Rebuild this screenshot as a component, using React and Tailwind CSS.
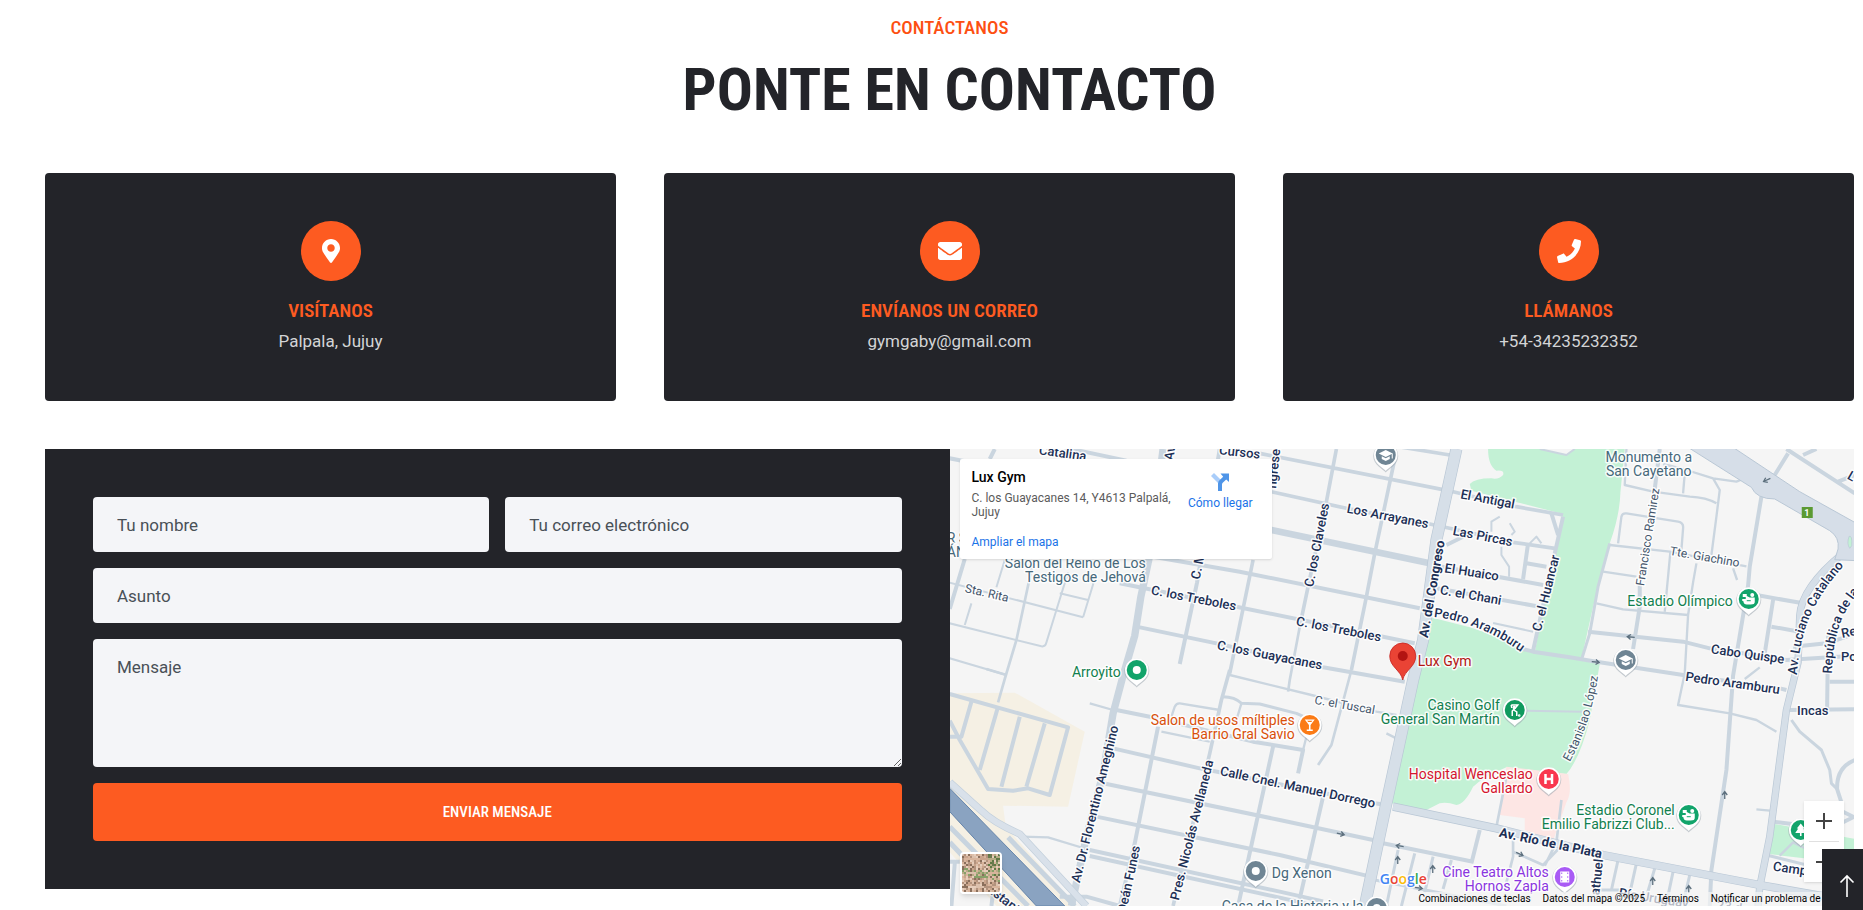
import React from "react";
import { FaMapMarkerAlt, FaEnvelope, FaPhone } from "react-icons/fa";

const ROADS = [
  [12, "M0 28L60 40M135 0L120 30M270 -20L530 35M810 0L742 400L690 645M45 330L0 480M610 323L870 368L1410 478M510 403L860 473L1395 583M560 533L800 583L1120 655L1365 698"],
  [20, "M965 243L1440 343"],
  [11, "M965 128L1190 178L1440 225L1510 240L1690 280L1815 298M930 13L1510 128L1700 173L1840 198M1340 -8L1500 18M1160 0L1130 158L1075 413L1050 533M1335 30L1275 313L1250 443L1205 663M910 333L840 673M840 663L815 753L780 913L670 1371"],
  [8, "M1050 533L1020 693L1015 728M1205 663L1145 888L1105 948"],
  [22, "M640 0L597 333L573 445L555 560L520 680L490 793L460 973L410 1163L365 1371"],
  [6, "M0 401L400 505M165 333L140 415M355 370L320 483L290 580Q287 594 275 592L0 523M432 400L400 505M330 433L415 453M0 628L170 678M65 463L45 528"],
  [8, "M250 340L200 573L165 690L145 760M110 660L170 678"],
  [12, "M1840 203L1815 313L1750 605M1700 595L1750 608L1860 625L1940 638L2200 678L2490 718L2510 723M1460 350L1780 408M1460 418L1770 473M1735 283L1720 390M1730 343L1790 353M1490 288L1540 263M1805 193L1825 258"],
  [6, "M1650 203L1625 218L1625 248M1680 223L1695 248L1685 258M1655 293L1655 318L1678 353L1678 383M1740 283L1760 263L1775 283M1630 522L1750 548M1770 0L1850 18L1875 0M1730 785L1900 788"],
  [12, "M2515 13L2475 78M2510 0L2715 133M2560 18L2600 0M2665 98L2715 78M2435 143L2400 353L2395 410L2350 680L2330 963L2285 1263L2280 1371M2130 0L2115 120M2070 405L2070 473L2050 600M1915 548L2200 578L2280 598L2510 633L2715 620M2420 438L2560 463M2470 453L2445 613M2465 533L2550 548"],
  [7, "M2030 0L2025 108L2110 128L2220 143Q2270 145 2300 163M2205 73L2200 133M2140 45L2210 63L2290 88L2310 123L2300 203L2285 318M2290 88L2360 98L2380 90M2005 283L2015 203Q2017 192 2030 193L2185 218Q2202 221 2200 238L2195 303M1980 288L2160 308L2390 352M2162 308L2145 488M1960 368L2060 383M1940 463L2020 481L2215 498M2240 343L2230 400L2215 498L2205 673L2185 768L2340 793L2420 813L2480 848M2350 358L2362 393M2385 690L2430 655M2420 1081L2460 1085"],
  [9, "M1980 283L1945 413L1920 553L1895 633M2525 813L2550 848L2615 903L2640 963L2645 1003L2665 1023"],
  [12, "M2635 560L2632 780M2530 593L2630 583L2715 555M2640 698L2715 698M2520 783L2715 781M2715 933Q2660 955 2662 1020L2675 1060M2680 1088L2712 1104L2680 1120M2470 1118L2570 1130"],
  [8, "M1835 1053L1820 1180L1785 1250M1690 1173L1690 1223L1670 1300M1690 1208L1780 1248L1840 1185M1670 983L1640 1133"],
  [12, "M1590 1143L1565 1243M1300 1183L1570 1238M460 1003L990 1113L1270 1173M490 898L750 958L1275 1063L1310 1068M440 1103L990 1218L1250 1280M500 783L600 803L910 878L1060 903L1045 973M625 833L555 1183L510 1371M970 893L865 1371M1120 1043L1045 1371M420 1203L990 1328L1120 1357M420 1221L990 1346L1100 1371"],
  [9, "M1345 1203L1310 1371M1395 1213L1355 1371M1450 1223L1425 1330M1505 1233L1480 1320M2005 1233L1985 1323M2060 1243L2040 1333M2115 1258L2090 1343M2170 1268L2150 1363M2220 1278L2200 1363M1275 1293L1670 1371M1935 1323L2010 1323M2450 1218L2600 1255"],
  [7, "M840 678L1085 738L1280 788L1340 798M1310 853L1340 868M420 763L490 783M665 803L675 773Q680 762 690 763L810 783M635 848L780 878M875 763L860 813M1070 863L1060 903M215 1163L295 1165L420 1203M2490 1220L2530 1180L2570 1200"],
  [9, "M815 743Q855 742 875 763L930 765L1040 793L1062 803"],
  [12, "M0 735L355 835L300 1038L235 1018L190 1025L115 1020L30 873L0 815M65 758L35 863L0 863M145 773L90 963M210 803L155 1013M285 823L230 1013M0 1238L30 1238M15 1243L5 1371M330 1343L410 1343L510 1371M130 1330L125 1371"],
];

const LABELS = [
  ["C. los Treboles", 244, 149, 11], ["C. los Treboles", 389, 180, 11], ["C. los Guayacanes", 320, 206, 11],
  ["Los Arrayanes", 438, 67, 11], ["El Antigal", 538, 50, 11], ["Las Pircas", 533, 87, 11], ["El Huaico", 522, 123, 9],
  ["C. el Chani", 521, 146, 10], ["C. los Claveles", 367, 96, -79], ["C. el Huancar", 596, 144, -76],
  ["Catalina", 113, 4, 8], ["Av", 220, 4, -80], ["C. M", 248, 117, -78], ["Cursos", 290, 3, 6], ["ngresel", 324, 18, -84],
  ["Cabo Quispe", 798, 205, 8], ["Pedro Aramburu", 783, 234, 8], ["Re", 899, 183, -12], ["Po", 899, 207, 0], ["L", 902, 27, 30],
  ["Incas", 863, 261, 0], ["Calle Cnel. Manuel Dorrego", 348, 338, 12], ["Av. Dr. Florentino Ameghino", 145, 355, -76],
  ["Pres. Nicolás Avellaneda", 242, 381, -76], ["Deán Funes", 179, 430, -78], ["Constant", 48, 445, 38],
  ["athuel", 647, 428, -84], ["Campo", 844, 420, 8], ["Río Uruguay", 704, 449, 9], ["23 de", 783, 458, 9],
];
const MAJOR = [["Av. del Congreso", 482, 140, -80], ["Av. Río de la Plata", 601, 394, 12]];
const MINOR = [["Sta. Rita", 37, 144, 13], ["Tte. Giachino", 755, 108, 10], ["Francisco Ramirez", 698, 88, -81], ["C. el Tuscal", 395, 256, 10]];

const PLACES = [
  ["end", "#46687a", 196, 119, ["Salón del Reino de Los", "Testigos de Jehová"]],
  ["middle", "#46687a", 699, 13, ["Monumento a", "San Cayetano"]],
  ["end", "#12804f", 171, 228, ["Arroyito"]],
  ["end", "#12804f", 783, 157, ["Estadio Olímpico"]],
  ["end", "#12804f", 550, 261, ["Casino Golf", "General San Martín"]],
  ["end", "#12804f", 725, 366, ["Estadio Coronel", "Emilio Fabrizzi Club..."]],
  ["end", "#d5152f", 583, 330, ["Hospital Wenceslao", "Gallardo"]],
  ["end", "#d9500a", 345, 276, ["Salon de usos míltiples", "Barrio Gral Savio"]],
  ["end", "#8a35e0", 599, 428, ["Cine Teatro Altos", "Hornos Zapla"]],
  ["start", "#46687a", 322, 429, ["Dg Xenon"]],
  ["start", "#46687a", 272, 462, ["Casa de la Historia y la"]],
  ["start", "#46687a", -3, 94, ["R S", "ÁN"]],
  ["start", "#b31412", 468, 217, ["Lux Gym"]],
];

const ARROWS = [
  [681, 188, 185], [646, 213, 5], [817, 31, 155], [775, 346, -90], [703, 432, -90], [739, 440, -90],
  [391, 385, 12], [450, 397, 190], [448, 411, -90], [483, 420, -90], [570, 405, 25], [469, 439, 8],
];

function Street({ items, size, weight, fill }) {
  return items.map(([text, x, y, angle], i) => (
    <text key={i} transform={`translate(${x} ${y}) rotate(${angle})`} textAnchor="middle" dominantBaseline="central" fontSize={size} fontWeight={weight} fill={fill}>
      {text}
    </text>
  ));
}

const GLYPHS = {
  dot: <circle r="4" fill="#fff" />,
  school: (
    <g fill="#fff">
      <path d="M0 -5L7 -1.5L0 2L-7 -1.5Z" />
      <path d="M-4 1.2V4L0 6L4 4V1.2L0 3.2Z" />
      <path d="M6 -1.5H7V3.5H6Z" />
    </g>
  ),
  stadium: (
    <g fill="#fff">
      <path d="M-6 -5H-2V-3L1 -1.5H6V3Q6 5.5 2 5.5H-2Q-5 5.5 -5.5 2H-6.5V0H-3V-2H-6Z" />
      <circle cx="3.5" cy="-4" r="2" />
      <path d="M-2 1.2H2V2.2H-2Z" fill="#12a46b" />
    </g>
  ),
  bar: <path d="M-5 -5.5H5L.8 0V4.6H3V6H-3V4.6H-.8V0ZM-2.6 -4.2L-1.6 -3H1.6L2.6 -4.2Z" fill="#fff" fillRule="evenodd" />,
  golf: (
    <g stroke="#fff" fill="none" strokeWidth="1.5">
      <path d="M-3.5 -5H3L1 -2.5L-2.5 1V6M-1 0L2 2V6M-3.5 -5L-3 -2" />
      <circle cx="-.5" cy="-2.5" r="1" fill="#fff" />
      <circle cx="4.5" cy="5.5" r=".5" />
    </g>
  ),
  hospital: <path d="M-4.5 -5H-2V-1.3H2V-5H4.5V5H2V1.2H-2V5H-4.5Z" fill="#fff" />,
  cinema: <path d="M-4.5 -5.5H4.5V5.5H-4.5ZM-3.5 -4.5V-3H-2.5V-4.5ZM-3.5 -.8V.8H-2.5V-.8ZM-3.5 3V4.5H-2.5V3ZM2.5 -4.5V-3H3.5V-4.5ZM2.5 -.8V.8H3.5V-.8ZM2.5 3V4.5H3.5V3Z" fill="#fff" fillRule="evenodd" />,
  tree: <path d="M0 -6.5L4 -1.5H2.5L5.5 3H.8V6H-.8V3H-5.5L-2.5 -1.5H-4Z" fill="#fff" />,
};

const PINS = [
  [436, 6, "#6f8594", "school"], [676, 211, "#6f8594", "school"], [799, 150, "#12a46b", "stadium"], [739, 366, "#12a46b", "stadium"],
  [187, 221, "#12a46b", "dot"], [360, 276, "#fb7b16", "bar"], [565, 261, "#109a5e", "golf"], [599, 330, "#f9374f", "hospital"],
  [615, 428, "#a95bf5", "cinema"], [306, 422, "#6f8594", "dot"], [851, 381, "#12a46b", "tree"], [427, 459, "#6f8594", "dot"],
];

function StreetMap() {
  return (
    <svg viewBox="0 0 905 457" preserveAspectRatio="xMidYMid slice" className="absolute inset-0 h-full w-full" role="img" aria-label="Mapa de Palpalá" fontFamily="Roboto, sans-serif">
      <rect width="905" height="457" fill="#f5f5f5" />
      <g transform="scale(.333333)" fill="none" strokeLinejoin="round">
        <path fill="#c3f1d5" d="M1615 0Q1615 50 1640 65Q1665 62 1660 78Q1648 92 1625 88Q1575 88 1560 105L1565 125L1840 195L1815 313L1755 608L1895 630L1930 473L1980 283Q2010 200 2012 130L2025 0H1875L1850 18L1770 0Z" />
        <path fill="#c3f1d5" d="M1425 500L1560 535Q1640 560 1720 603L1950 645L1920 813Q1890 930 1850 975L1780 968L1670 955Q1600 985 1570 1013Q1545 1065 1520 1068Q1490 1058 1470 1063L1430 1083L1310 1060Z" />
        <path fill="#fde6e4" d="M1670 953L1855 975Q1868 1030 1850 1060L1810 1175L1725 1143V1108L1650 1098Z" />
        <path fill="#c3f1d5" d="M2475 1125L2715 1170V1245L2455 1215Z" />
        <path fill="#f5f0e4" d="M0 733L195 731L405 848L355 1073L160 1070L168 1133L380 1371H140L0 1210Z" />
        {ROADS.map(([w, d], i) => <path key={i} d={d} stroke="#cad5df" strokeWidth={w} />)}
        <path d="M0 1000L95 1085Q130 1120 210 1155L410 1371" stroke="#c2cfdb" strokeWidth="22" />
        <path d="M0 1000L95 1085Q130 1120 210 1155L410 1371" stroke="#d9e1ea" strokeWidth="18" />
        <path d="M175 1165L375 1371M0 1133L235 1371M0 1180L180 1371" stroke="#c8d4df" strokeWidth="15" />
        <path d="M0 1018L345 1371H260L0 1088Z" fill="#8aa3c1" stroke="#6585aa" strokeWidth="3" />
        <path d="M1520 0L1460 273L1420 573L1390 693L1310 1063L1245 1371" stroke="#b9c7d5" strokeWidth="36" />
        <path d="M1330 1073L1640 1138L1960 1218L2430 1308L2640 1345" stroke="#b9c7d5" strokeWidth="25" />
        <path d="M2680 313Q2555 415 2550 500L2545 640L2510 783L2460 1163L2430 1313L2425 1371" stroke="#b9c7d5" strokeWidth="22" />
        <path d="M1330 1073L1640 1138L1960 1218L2430 1308L2640 1345" stroke="#d6dfe8" strokeWidth="21" />
        <path d="M2680 313Q2555 415 2550 500L2545 640L2510 783L2460 1163L2430 1313L2425 1371" stroke="#d6dfe8" strokeWidth="18" />
        <path d="M1520 0L1460 273L1420 573L1390 693L1310 1063L1245 1371" stroke="#d6dfe8" strokeWidth="32" />
        <path fill="#d6dee8" stroke="#b9c7d5" strokeWidth="3" d="M2215 -5L2405 115Q2420 150 2475 150L2640 245Q2670 265 2665 300L2655 332L2720 335V223L2550 128L2350 -5Z" />
        <path d="M2698 262Q2708 258 2706 290L2700 298Q2690 285 2698 262Z" fill="#c3f1d5" stroke="#b9c7d5" strokeWidth="2" />
      </g>
      {ARROWS.map(([x, y, a], i) => (
        <path key={i} transform={`translate(${x} ${y}) rotate(${a})`} d="M-4 0H3M0 -2.5L3.5 0L0 2.5" stroke="#5c6f7d" strokeWidth="1.3" fill="none" />
      ))}
      <defs>
        <path id="aramburu" d="M484 168Q532 173 578 208" />
        <path id="catalano" d="M847 226C851 180 862 150 903 107" />
        <path id="republica" d="M882 225C884 185 890 165 914 137" />
        <path id="lopez" d="M620 313Q643 272 650 215" />
      </defs>
      <g stroke="#ffffff" strokeOpacity=".85" strokeWidth="3" strokeLinejoin="round" style={{ paintOrder: "stroke" }}>
        <Street items={MINOR} size={12} weight={400} fill="#44556b" />
        <Street items={LABELS} size={13} weight={500} fill="#1c2f55" />
        <Street items={MAJOR} size={13} weight={700} fill="#1c2f55" />
        <text fontSize="13" fontWeight="500" fill="#1c2f55"><textPath href="#aramburu">Pedro Aramburu</textPath></text>
        <text fontSize="13" fontWeight="500" fill="#1c2f55"><textPath href="#catalano">Av. Luciano Catalano</textPath></text>
        <text fontSize="13" fontWeight="500" fill="#1c2f55"><textPath href="#republica">República de la</textPath></text>
        <text fontSize="12" fill="#44556b"><textPath href="#lopez">Estanislao López</textPath></text>
        {PLACES.map(([anchor, fill, x, y, lines]) =>
          lines.map((line, i) => (
            <text key={line} x={x} y={y + i * 14} textAnchor={anchor} fontSize="14" fill={fill}>{line}</text>
          ))
        )}
        <text x="430" y="435" fontFamily="'Open Sans', sans-serif" fontSize="14" fontWeight="600">
          <tspan fill="#4285f4">G</tspan><tspan fill="#ea4335">o</tspan><tspan fill="#fbbc04">o</tspan><tspan fill="#4285f4">g</tspan><tspan fill="#34a853">l</tspan><tspan fill="#ea4335">e</tspan>
        </text>
      </g>
      <rect x="852" y="58" width="11" height="11" fill="#5b9a33" />
      <text x="857" y="67" textAnchor="middle" fontSize="9" fontWeight="700" fill="#fff">1</text>
      {PINS.map(([x, y, color, glyph]) => (
        <g key={`${x}-${y}`} transform={`translate(${x} ${y})`}>
          <path d="M0 17.5C-2 14.5 -12.5 10 -12.5 1A12.5 12.5 0 1 1 12.5 1C12.5 10 2 14.5 0 17.5Z" fill="#9aa5ae" fillOpacity=".55" />
          <path d="M0 16C-2 13 -11.8 9 -11.8 0A11.8 11.8 0 1 1 11.8 0C11.8 9 2 13 0 16Z" fill="#fff" />
          <circle r="10" fill={color} />
          {GLYPHS[glyph]}
        </g>
      ))}
      <path d="M453 231C451 221 440 218 440 207A13 13 0 1 1 466 207C466 218 455 221 453 231Z" fill="#ea4335" stroke="#c5221f" strokeWidth=".8" />
      <circle cx="453" cy="207" r="5" fill="#b31412" />
    </svg>
  );
}

function SatelliteTile() {
  const tones = ["#d8b49c", "#c9a48c", "#8a6f5c", "#e6cdbb", "#dcc0ac", "#b3937e"];
  const greens = ["#5f7a45", "#86a068", "#6b7a50", "#b7ab86"];
  const cells = [];
  for (let r = 0; r < 19; r++) {
    for (let c = 0; c < 19; c++) {
      const n = (r * 37 + c * 59 + r * c * 13 + r * r * 7) % 97;
      const wooded = (c > 12 && r < 11 && n % 3) || (Math.abs(r - 8 - c / 5) < 2 && n % 2);
      const set = wooded ? greens : tones;
      cells.push(<rect key={`${r}-${c}`} x={c * 2} y={r * 2} width="2" height="2" fill={set[n % set.length]} />);
    }
  }
  return <svg viewBox="0 0 38 38" className="h-full w-full" aria-hidden="true">{cells}</svg>;
}

const display = "font-['Roboto_Condensed',sans-serif]";
const field = "block w-full rounded bg-[#f4f5f8] px-6 text-[17px] text-[#212529] placeholder:text-[#495057] placeholder:opacity-100";

function ContactCard({ icon: Icon, title, children }) {
  return (
    <div className="flex flex-col items-center rounded bg-[#232429] px-6 py-12 text-center">
      <span className="flex size-[60px] items-center justify-center rounded-full bg-[#fd5b21] text-white">
        <Icon size={24} />
      </span>
      <h3 className={`${display} mt-4 text-[19px] leading-7 font-semibold text-[#fd5b21] uppercase`}>{title}</h3>
      <p className="mt-1 text-[17px] leading-6 text-[#d3d4d6]">{children}</p>
    </div>
  );
}

export default function App() {
  return (
    <main className="bg-white pr-[9px] pl-[45px] font-[Roboto,sans-serif]">
      <header className="pt-4 pb-[41px] text-center">
        <p className={`${display} text-[19px] leading-6 font-medium text-[#fd4f12] uppercase`}>Contáctanos</p>
        <h1 className={`${display} mt-2 text-[60px] leading-[84px] font-bold text-[#232429] uppercase`}>Ponte en contacto</h1>
      </header>

      <div className="grid grid-cols-3 gap-12">
        <ContactCard icon={FaMapMarkerAlt} title="Visítanos">Palpala, Jujuy</ContactCard>
        <ContactCard icon={FaEnvelope} title="Envíanos un correo">gymgaby@gmail.com</ContactCard>
        <ContactCard icon={FaPhone} title="Llámanos">+54-34235232352</ContactCard>
      </div>

      <div className="mt-12 grid grid-cols-2 items-start">
        <form className="grid grid-cols-2 gap-4 bg-[#232429] p-12" onSubmit={(e) => e.preventDefault()}>
          <input type="text" aria-label="Tu nombre" placeholder="Tu nombre" className={`${field} h-[55px]`} />
          <input type="email" aria-label="Tu correo electrónico" placeholder="Tu correo electrónico" className={`${field} h-[55px]`} />
          <input type="text" aria-label="Asunto" placeholder="Asunto" className={`${field} col-span-2 h-[55px]`} />
          <textarea aria-label="Mensaje" placeholder="Mensaje" className={`${field} col-span-2 h-32 resize py-4 leading-6`} />
          <button type="submit" className={`${display} col-span-2 h-[58px] rounded bg-[#fd5b21] text-[15px] font-medium text-white uppercase`}>Enviar mensaje</button>
        </form>

        <section aria-label="Mapa" className="relative h-[457px] overflow-hidden">
          <StreetMap />

          <div className="absolute top-[10px] left-[10px] flex w-[312px] justify-between rounded-xs bg-white pt-[10px] pr-[19px] pb-[7px] pl-3 shadow-sm">
            <div className="w-[206px]">
              <h2 className="text-sm leading-4 font-medium text-black">Lux Gym</h2>
              <p className="mt-[6px] text-xs leading-[14px] text-[#5b5b5b]">C. los Guayacanes 14, Y4613 Palpalá, Jujuy</p>
              <a href="#mapa" className="mt-[13px] block text-xs leading-5 text-[#1a73e8]">Ampliar el mapa</a>
            </div>
            <a href="#ruta" className="flex flex-col items-center gap-1 pt-1 text-xs leading-4 whitespace-nowrap text-[#1a73e8]">
              <svg viewBox="0 0 18 18" className="size-[18px]" aria-hidden="true">
                <path d="M0 3L3 0L10 7L7 10Z" fill="#a9cdfa" />
                <path d="M7 18V10.5Q7 8.6 8.5 7.2L12.2 3.7L9.5 .5H18V9L15.2 6.5L11.5 10Q11 10.5 11 11.5V18Z" fill="#4f95e8" />
              </svg>
              Cómo llegar
            </a>
          </div>

          <button type="button" aria-label="Mostrar imágenes satelitales" className="absolute bottom-3 left-[10px] size-[42px] overflow-hidden rounded border-2 border-white shadow-md">
            <SatelliteTile />
          </button>

          <div className="absolute right-[10px] bottom-6 flex w-10 flex-col items-center bg-white shadow">
            <button type="button" aria-label="Acercar" className="flex size-10 items-center justify-center">
              <svg viewBox="0 0 16 16" className="size-4" aria-hidden="true"><path d="M0 7H7V0H9V7H16V9H9V16H7V9H0Z" fill="#444" /></svg>
            </button>
            <span className="h-px w-[30px] bg-[#e0e0e0]" />
            <button type="button" aria-label="Alejar" className="flex size-10 items-center justify-center">
              <svg viewBox="0 0 16 16" className="size-4" aria-hidden="true"><path d="M0 7H16V9H0Z" fill="#444" /></svg>
            </button>
          </div>

          <div className="absolute right-0 bottom-0 flex h-[14px] bg-[#f5f5f5]/70 text-[10px] leading-[14px] whitespace-nowrap text-black">
            <button type="button" className="px-[6px]">Combinaciones de teclas</button>
            <span className="px-[6px]">Datos del mapa ©2025</span>
            <a href="#terminos" className="px-[6px]">Términos</a>
            <a href="#notificar" className="px-[6px]">Notificar un problema de Maps</a>
          </div>
        </section>
      </div>

      <button type="button" aria-label="Volver arriba" className="fixed -right-[9px] -bottom-[13px] flex h-[74px] w-[50px] items-center justify-center bg-[#232429] text-white">
        <svg viewBox="0 0 16 24" className="h-6 w-4" fill="none" stroke="currentColor" strokeWidth="1.6" aria-hidden="true">
          <path d="M8 23V2M1.5 8.5L8 2L14.5 8.5" />
        </svg>
      </button>
    </main>
  );
}
